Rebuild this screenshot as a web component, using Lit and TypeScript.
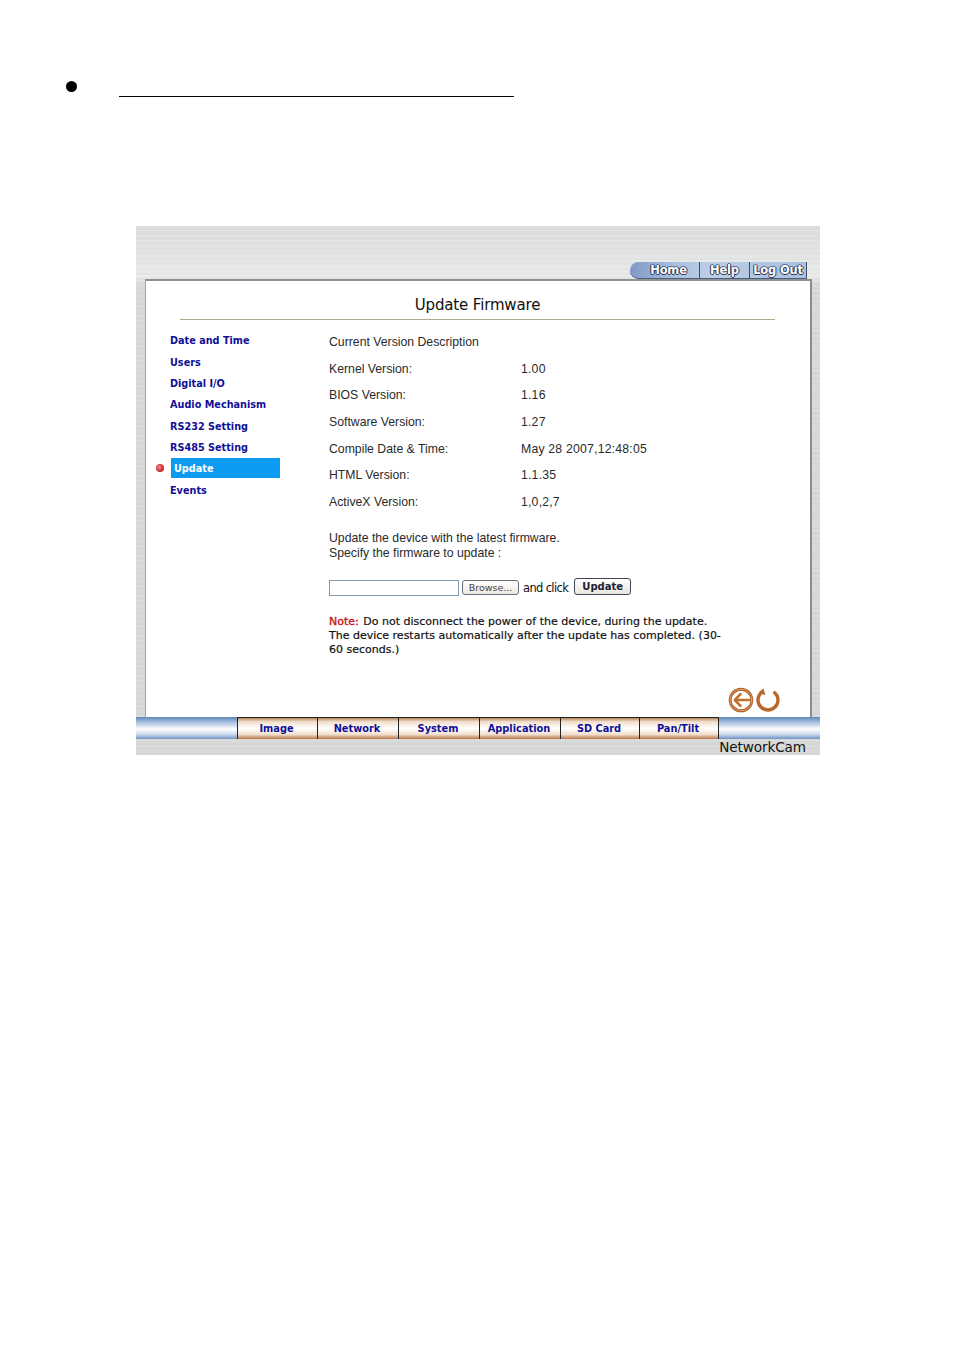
import { LitElement, html, css } from "lit";
import { customElement } from "lit/decorators.js";

@customElement("app-root")
export class AppRoot extends LitElement {
  static styles = css`
    :host { display: block; width: 954px; height: 1355px; background: #fff; font-family: "Liberation Sans", Arial, sans-serif; color: #2a2a2a; overflow: hidden; }
    .heading { display: flex; align-items: flex-start; padding: 81px 0 0 66px; height: 226px; box-sizing: border-box; }
    .dot { width: 11px; height: 11px; border-radius: 50%; background: #000; }
    .rule { width: 395px; height: 1px; background: #000; margin: 15px 0 0 42px; }
    .shot { width: 684px; height: 529px; margin-left: 136px; display: flex; flex-direction: column;
      background: repeating-linear-gradient(180deg, rgba(255,255,255,0) 0 2px, rgba(120,120,120,.035) 2px 4px, rgba(255,255,255,.12) 4px 5px), linear-gradient(180deg, #dcdddd 0, #e9eaea 9.5%, #d8d9d9 11%, #d8d9d9 100%); }
    .top { flex: none; height: 53px; display: flex; justify-content: flex-end; align-items: flex-end; padding-right: 13px; box-sizing: border-box; }
    .pill { display: flex; height: 16px; border-radius: 9px 0 0 9px; overflow: hidden;
      background: linear-gradient(90deg, #7f9ac6 0, #a9bfe0 25%, #bccde6 45%, #a9bfe0 100%); border-bottom: 1px solid #4a5f80; }
    .pill span { display: flex; align-items: center; justify-content: center; font: bold 11.5px "DejaVu Sans", sans-serif; color: #fff; text-shadow: 1px 0 0 #2b3350, -1px 0 0 #2b3350, 0 1px 0 #2b3350, 0 -1px 0 #5a6a90; border-right: 1px solid #3d4f70; box-sizing: border-box; letter-spacing: -0.2px; }
    .home { width: 70px; padding-left: 8px; }
    .help { width: 50px; }
    .logout { width: 57px; }
    .mid { flex: none; height: 438px; display: flex; padding: 0 8px 0 9px; box-sizing: border-box; }
    .panel { flex: 1; min-width: 0; background: #fff; border-top: 2px solid #8f9090; border-left: 1px solid #a3a3a3; border-right: 2px solid #8c8c8c; display: flex; flex-direction: column; box-sizing: border-box; }
    h1 { flex: none; margin: 14px 0 0; height: 24px; text-align: center; font: 400 15px/20px "DejaVu Sans", sans-serif; color: #111; padding-right: 1px; letter-spacing: -0.15px; box-sizing: border-box; }
    .sep { flex: none; height: 1px; background: #b0a98a; margin: 0 35px 0 34px; }
    .cols { display: flex; padding-top: 9px; flex: 1; min-height: 0; }
    .menu { width: 183px; flex: none; padding: 1px 0 0 24px; box-sizing: border-box; display: flex; flex-direction: column; }
    .menu a { flex: none; height: 21.35px; display: flex; align-items: center; font: bold 9.7px "DejaVu Sans", sans-serif; color: #101096; position: relative; }
    .menu a.on { background: #0d9bf2; color: #fff; width: 109px; height: 20px; margin: 0 0 1.35px 1px; padding-left: 3px; box-sizing: border-box; }
    .bead { position: absolute; left: -15px; top: 6px; width: 8px; height: 8px; border-radius: 50%; background: radial-gradient(circle at 40% 40%, #f08a8a, #c8191c 70%); }
    .content { flex: 1; min-width: 0; font-size: 12.25px; display: flex; flex-direction: column; }
    .vrow { flex: none; display: grid; grid-template-columns: 192px 1fr; height: 26.6px; align-items: center; }
    .vrow span + span { letter-spacing: 0.2px; }
    .cap { flex: none; height: 26.6px; display: flex; align-items: center; }
    .intro { flex: none; margin-top: 16px; line-height: 15px; }
    .form { flex: none; display: flex; align-items: center; margin-top: 14px; height: 22px; }
    .input { width: 130px; height: 16px; border: 1px solid #7f9db9; box-sizing: border-box; margin-top: 4px; }
    .browse { width: 57px; height: 15px; margin: 3px 4px 0 3px; border: 1px solid #66707a; border-radius: 3px; background: linear-gradient(180deg,#fff,#ece9e0); font: 9.5px "DejaVu Sans", sans-serif; color: #444; display: flex; align-items: center; justify-content: center; box-sizing: border-box; }
    .and { font: 11.5px "DejaVu Sans", sans-serif; letter-spacing: -0.65px; color: #111; margin-top: 3px; }
    .btn { width: 57px; height: 17px; margin-left: 6px; margin-top: 1px; border: 1px solid #445; border-radius: 3px; background: linear-gradient(180deg,#fff,#e9e6dc); font: bold 10px "DejaVu Sans", sans-serif; color: #223; display: flex; align-items: center; justify-content: center; box-sizing: border-box; }
    .note { flex: none; margin: 18px 0 0; font: 11px/13.8px "DejaVu Sans", sans-serif; color: #111; -webkit-text-stroke: 0.2px #111; width: 397px; }
    .note b { color: #c8101a; font-weight: 400; -webkit-text-stroke: 0.3px #c8101a; margin-right: 1px; }
    .icons { flex: none; display: flex; justify-content: flex-end; gap: 2px; padding-right: 30px; height: 30px; align-items: flex-start; }
    .tabs { flex: none; height: 22px; display: flex; padding-left: 101px; background: linear-gradient(180deg, #5f87bb 0, #a9c2e0 25%, #fff 55%, #cfdcee 78%, #6e93c4 100%); }
    .tabs a { height: 22px; padding-right: 2px; border-top: 1px solid #222; border-left: 1px solid #222; box-sizing: border-box; display: flex; align-items: center; justify-content: center; font: bold 9.8px "DejaVu Sans", sans-serif; color: #101096; background: linear-gradient(180deg, #b8855a 0, #f1dfcd 18%, #fff 50%, #f1dfcd 78%, #b8794a 100%); }
    .tabs a:last-child { border-right: 1px solid #222; }
    .status { flex: none; height: 16px; text-align: right; padding-right: 14px; font: 13.6px/16px "DejaVu Sans", sans-serif; color: #111; letter-spacing: -0.1px; }
  `;

  render() {
    const menu = ["Date and Time", "Users", "Digital I/O", "Audio Mechanism", "RS232 Setting", "RS485 Setting", "Update", "Events"];
    const rows = [["Kernel Version:", "1.00"], ["BIOS Version:", "1.16"], ["Software Version:", "1.27"], ["Compile Date & Time:", "May 28 2007,12:48:05"], ["HTML Version:", "1.1.35"], ["ActiveX Version:", "1,0,2,7"]];
    const tabs: [string, number][] = [["Image", 80], ["Network", 81], ["System", 81], ["Application", 81], ["SD Card", 79], ["Pan/Tilt", 80]];
    return html`
      <div class="heading"><div class="dot"></div><div class="rule"></div></div>
      <div class="shot">
        <div class="top">
          <div class="pill"><span class="home">Home</span><span class="help">Help</span><span class="logout">Log Out</span></div>
        </div>
        <div class="mid">
          <div class="panel">
            <h1>Update Firmware</h1>
            <div class="sep"></div>
            <div class="cols">
              <div class="menu">
                ${menu.map((m) => html`<a class=${m === "Update" ? "on" : ""}>${m === "Update" ? html`<i class="bead"></i>` : ""}${m}</a>`)}
              </div>
              <div class="content">
                <div class="cap">Current Version Description</div>
                ${rows.map(([a, b]) => html`<div class="vrow"><span>${a}</span><span>${b}</span></div>`)}
                <div class="intro">Update the device with the latest firmware.<br />Specify the firmware to update :</div>
                <div class="form">
                  <div class="input"></div><div class="browse">Browse...</div><span class="and">and click</span><div class="btn">Update</div>
                </div>
                <p class="note"><b>Note:</b> Do not disconnect the power of the device, during the update. The device restarts automatically after the update has completed. (30-60 seconds.)</p>
              </div>
            </div>
            <div class="icons">
              <svg width="26" height="26" viewBox="0 0 26 26" fill="none" stroke-linecap="round" stroke-linejoin="round">
                <circle cx="13" cy="13" r="10.8" stroke="#b0622a" stroke-width="3"/>
                <circle cx="13" cy="13" r="10.8" stroke="#e8a878" stroke-width="0.8"/>
                <path d="M21 13H7M12.5 7.2 6.8 13l5.7 5.8" stroke="#c0702c" stroke-width="2.6"/>
              </svg>
              <svg width="24" height="26" viewBox="0 0 24 26" fill="none">
                <path d="M7 4.5C3.6 6.5 2 9.6 2 13a10 10 0 0 0 20 0c0-3.6-1.8-6.4-4.5-8.2" stroke="#b8682a" stroke-width="3.4"/>
                <path d="M3 5 7.4 1.5 9.4 8 7.2 7.4z" fill="#b8682a"/>
              </svg>
            </div>
          </div>
        </div>
        <div class="tabs">${tabs.map(([t, w]) => html`<a style="width:${w}px">${t}</a>`)}</div>
        <div class="status">NetworkCam</div>
      </div>
    `;
  }
}
